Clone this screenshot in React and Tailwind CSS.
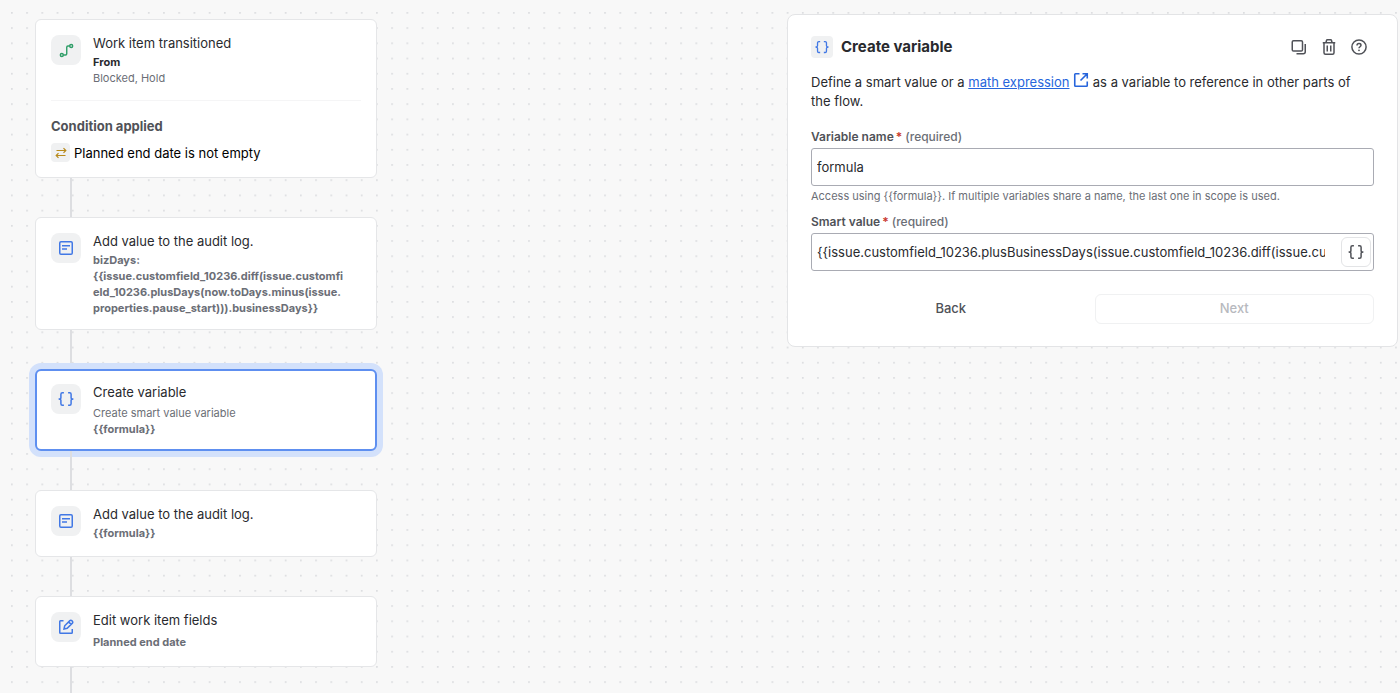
import React from "react";

function BracesIcon({ className }) {
  return (
    <svg viewBox="0 0 16 16" className={className} fill="none" stroke="currentColor" strokeWidth="1.5" aria-hidden="true">
      <path d="M5.9 1.75H4.4c-.83 0-1.5.67-1.5 1.5v3.4C2.9 7.5 2.1 8 .6 8c1.5 0 2.3.5 2.3 1.35v3.4c0 .83.67 1.5 1.5 1.5h1.5" />
      <path d="M10.1 1.75h1.5c.83 0 1.5.67 1.5 1.5v3.4c0 .85.8 1.35 2.3 1.35-1.5 0-2.3.5-2.3 1.35v3.4c0 .83-.67 1.5-1.5 1.5h-1.5" />
    </svg>
  );
}

function LogIcon({ className }) {
  return (
    <svg viewBox="0 0 16 16" className={className} fill="none" stroke="currentColor" strokeWidth="1.5" aria-hidden="true">
      <rect x="1.75" y="1.75" width="12.5" height="12.5" rx="1.25" />
      <path d="M4 5.75h8M4 9h5" />
    </svg>
  );
}

function TransitionIcon({ className }) {
  return (
    <svg viewBox="0 0 16 16" className={className} fill="none" stroke="currentColor" strokeWidth="1.5" aria-hidden="true">
      <circle cx="3" cy="12.75" r="1.6" />
      <circle cx="13" cy="3.25" r="1.6" />
      <path d="M4.6 12.75H7A1.25 1.25 0 0 0 8.25 11.5v-7A1.25 1.25 0 0 1 9.5 3.25h1.9" />
    </svg>
  );
}

function EditIcon({ className }) {
  return (
    <svg viewBox="0 0 16 16" className={className} fill="none" stroke="currentColor" strokeWidth="1.5" aria-hidden="true">
      <path d="M5.5 1.75H2.5a.75.75 0 0 0-.75.75v11c0 .41.34.75.75.75h11c.41 0 .75-.34.75-.75v-3.5" />
      <path d="M6 10l.7-3.2 5.2-5.2a1.3 1.3 0 0 1 1.85 0l.65.65a1.3 1.3 0 0 1 0 1.85L9.2 9.3 6 10ZM10.6 2.9l2.5 2.5" />
    </svg>
  );
}

function SwapIcon({ className }) {
  return (
    <svg viewBox="0 0 12 12" className={className} fill="none" stroke="currentColor" strokeWidth="1.2" aria-hidden="true">
      <path d="M1.5 3.5h9M8.5 1.2l2.3 2.3-2.3 2.3M10.5 8.5h-9M3.5 6.2 1.2 8.5l2.3 2.3" />
    </svg>
  );
}

function ExternalIcon({ className }) {
  return (
    <svg viewBox="0 0 16 16" className={className} fill="none" stroke="currentColor" strokeWidth="1.6" aria-hidden="true">
      <path d="M6.5 1.75H2.5a.75.75 0 0 0-.75.75v11c0 .41.34.75.75.75h11c.41 0 .75-.34.75-.75V9.5M9.5 1.75h4.75V6.5M14 2 7.5 8.5" />
    </svg>
  );
}

function CopyIcon({ className }) {
  return (
    <svg viewBox="0 0 16 16" className={className} fill="none" stroke="currentColor" strokeWidth="1.5" aria-hidden="true">
      <rect x="1.25" y="1.75" width="10.25" height="10.25" rx="1.25" />
      <path d="M14.25 5v7.75c0 1.1-.9 2-2 2H5.5" />
    </svg>
  );
}

function TrashIcon({ className }) {
  return (
    <svg viewBox="0 0 16 16" className={className} fill="none" stroke="currentColor" strokeWidth="1.5" aria-hidden="true">
      <path d="M1.75 3.75h12.5M5 3.5l.5-2c.1-.4.45-.75.9-.75h3.2c.45 0 .8.35.9.75l.5 2M3 4v9.75c0 .83.67 1.5 1.5 1.5h7c.83 0 1.5-.67 1.5-1.5V4M6.25 6.5v6M9.75 6.5v6" />
    </svg>
  );
}

function HelpIcon({ className }) {
  return (
    <svg viewBox="0 0 16 16" className={className} fill="none" stroke="currentColor" strokeWidth="1.5" aria-hidden="true">
      <circle cx="8" cy="8" r="7.1" />
      <path d="M6 6.5C6 5.3 6.9 4.6 8 4.6s2 .7 2 1.7c0 1.4-2 1.5-2 3" />
      <circle cx="8" cy="11.3" r=".9" fill="currentColor" stroke="none" />
    </svg>
  );
}

function Connector() {
  return <div className="ml-[35px] h-[39px] w-0.5 bg-[#dddee1]" />;
}

function StepHeader({ icon, title, children }) {
  return (
    <div className="flex items-start gap-3">
      <span className="flex size-[30px] shrink-0 items-center justify-center rounded-lg bg-[#f0f1f2] text-[#4178e5]">{icon}</span>
      <div className="min-w-0 flex-1">
        <h3 className="text-[13px] leading-[17px] text-[#292a2e]">{title}</h3>
        {children}
      </div>
    </div>
  );
}

const card = "rounded-md border border-[#e5e6e8] bg-white px-[15px] pt-[15px]";
const detail = "text-[11px] leading-4 text-[#6b6e76]";
const strongDetail = "text-[11px] leading-4 font-bold text-[#6b6e76]";
const fieldLabel = "block text-xs leading-4 font-semibold text-[#505258]";

export default function App() {
  return (
    <div className="relative min-h-screen bg-[#f8f8f8] font-['Inter',sans-serif] text-[#292a2e]">
      <svg className="absolute inset-0 h-full w-full" aria-hidden="true">
        <defs>
          <pattern id="dots" x="11" y="12" width="15.21" height="15.21" patternUnits="userSpaceOnUse">
            <rect width="1.7" height="1.7" fill="#dcdde0" />
          </pattern>
        </defs>
        <rect width="100%" height="100%" fill="url(#dots)" />
      </svg>

      <div className="relative flex h-screen items-start justify-between overflow-hidden pr-0.5 pl-[35px]">
        <main className="w-[342px] shrink-0 pt-[19px]">
          <section className={`${card} pb-[15px]`}>
            <StepHeader icon={<TransitionIcon className="size-[15px] text-[#2f9e68]" />} title="Work item transitioned">
              <p className="mt-0.5 text-[11px] leading-4 font-bold">From</p>
              <p className={detail}>Blocked, Hold</p>
            </StepHeader>
            <hr className="mt-[14px] border-[#f5f5f6]" />
            <h4 className="mt-4 text-[13px] leading-[18px] font-bold text-[#505258]">Condition applied</h4>
            <div className="mt-2 flex items-center gap-1">
              <span className="flex size-[19px] items-center justify-center rounded bg-[#f0f1f2] text-[#b88a1c]">
                <SwapIcon className="size-3" />
              </span>
              <span className="text-[13px] leading-[18px] text-black">Planned end date is not empty</span>
            </div>
          </section>
          <Connector />

          <section className={`${card} pb-[13px]`}>
            <StepHeader icon={<LogIcon className="size-4" />} title="Add value to the audit log.">
              <p className={`mt-0.5 pr-4 break-all ${strongDetail}`}>
                bizDays:
                <br />
                {"{{issue.customfield_10236.diff(issue.customfield_10236.plusDays(now.toDays.minus(issue.properties.pause_start))).businessDays}}"}
              </p>
            </StepHeader>
          </section>
          <Connector />

          <section className="rounded-md border-2 border-[#5e8ff0] bg-white px-[14px] pt-[13px] pb-3 ring-[6px] ring-[#d3e1fb]">
            <StepHeader icon={<BracesIcon className="size-4" />} title="Create variable">
              <p className={`mt-1 ${detail}`}>Create smart value variable</p>
              <p className={strongDetail}>{"{{formula}}"}</p>
            </StepHeader>
          </section>
          <Connector />

          <section className={`${card} pb-[15px]`}>
            <StepHeader icon={<LogIcon className="size-4" />} title="Add value to the audit log.">
              <p className={`mt-0.5 ${strongDetail}`}>{"{{formula}}"}</p>
            </StepHeader>
          </section>
          <Connector />

          <section className={`${card} pb-4`}>
            <StepHeader icon={<EditIcon className="size-4" />} title="Edit work item fields">
              <p className={`mt-[5px] ${strongDetail}`}>Planned end date</p>
            </StepHeader>
          </section>
          <Connector />
        </main>

        <aside className="mt-[14px] w-[611px] rounded-lg border border-[#e3e4e6] bg-white px-[23px] pt-[21px] pb-[22px]">
          <header className="flex h-[22px] items-center gap-2">
            <span className="flex size-[22px] items-center justify-center rounded bg-[#f0f1f2] text-[#4178e5]">
              <BracesIcon className="size-[14px]" />
            </span>
            <h2 className="text-[15px] leading-5 font-bold">Create variable</h2>
            <div className="ml-auto flex items-center gap-[14px] pr-[7px] text-[#505258]">
              <button type="button" aria-label="Duplicate"><CopyIcon className="size-4" /></button>
              <button type="button" aria-label="Delete"><TrashIcon className="size-4" /></button>
              <button type="button" aria-label="Help"><HelpIcon className="size-4" /></button>
            </div>
          </header>

          <p className="mt-[15px] pr-3 text-[13px] leading-[19px]">
            Define a smart value or a{" "}
            <a href="#math" className="text-[#2765dc] underline">math expression</a>{" "}
            <ExternalIcon className="-mt-1 inline-block size-4 align-[-1px] text-[#2765dc]" /> as a variable to reference in other parts of the flow.
          </p>

          <form onSubmit={(e) => e.preventDefault()}>
            <label htmlFor="variable-name" className={`mt-[18px] ${fieldLabel}`}>
              Variable name<span className="ml-0.5 text-[#c9372c]">*</span> <span className="font-medium text-[#6b6e76]">(required)</span>
            </label>
            <input
              id="variable-name"
              defaultValue="formula"
              className="mt-[3px] block h-[38px] w-full rounded-[3px] border border-[#a9abb3] bg-white px-[5px] text-[13px] outline-none"
            />
            <p className="mt-0.5 text-[11px] leading-4 text-[#6b6e76]">
              {"Access using {{formula}}. If multiple variables share a name, the last one in scope is used."}
            </p>

            <label htmlFor="smart-value" className={`mt-[10px] ${fieldLabel}`}>
              Smart value<span className="ml-0.5 text-[#c9372c]">*</span> <span className="font-medium text-[#6b6e76]">(required)</span>
            </label>
            <div className="mt-[3px] flex h-[38px] items-center gap-4 rounded-[3px] border border-[#a9abb3] bg-white pr-0.5 pl-[5px]">
              <input
                id="smart-value"
                defaultValue="{{issue.customfield_10236.plusBusinessDays(issue.customfield_10236.diff(issue.customfield_10236).businessDays)}}"
                className="h-full min-w-0 flex-1 bg-transparent text-[13px] outline-none"
              />
              <button type="button" aria-label="Insert smart value" className="flex size-[30px] items-center justify-center rounded-md border border-[#e3e4e6] text-[#505258]">
                <BracesIcon className="size-4" />
              </button>
            </div>

            <div className="mt-[23px] grid grid-cols-2 gap-1 text-[13px] font-medium">
              <button type="button" className="h-[30px] rounded-md text-[#505258]">Back</button>
              <button type="submit" disabled className="h-[30px] rounded-md border border-[#f0f1f2] text-[#b7b9be]">Next</button>
            </div>
          </form>
        </aside>
      </div>
    </div>
  );
}
